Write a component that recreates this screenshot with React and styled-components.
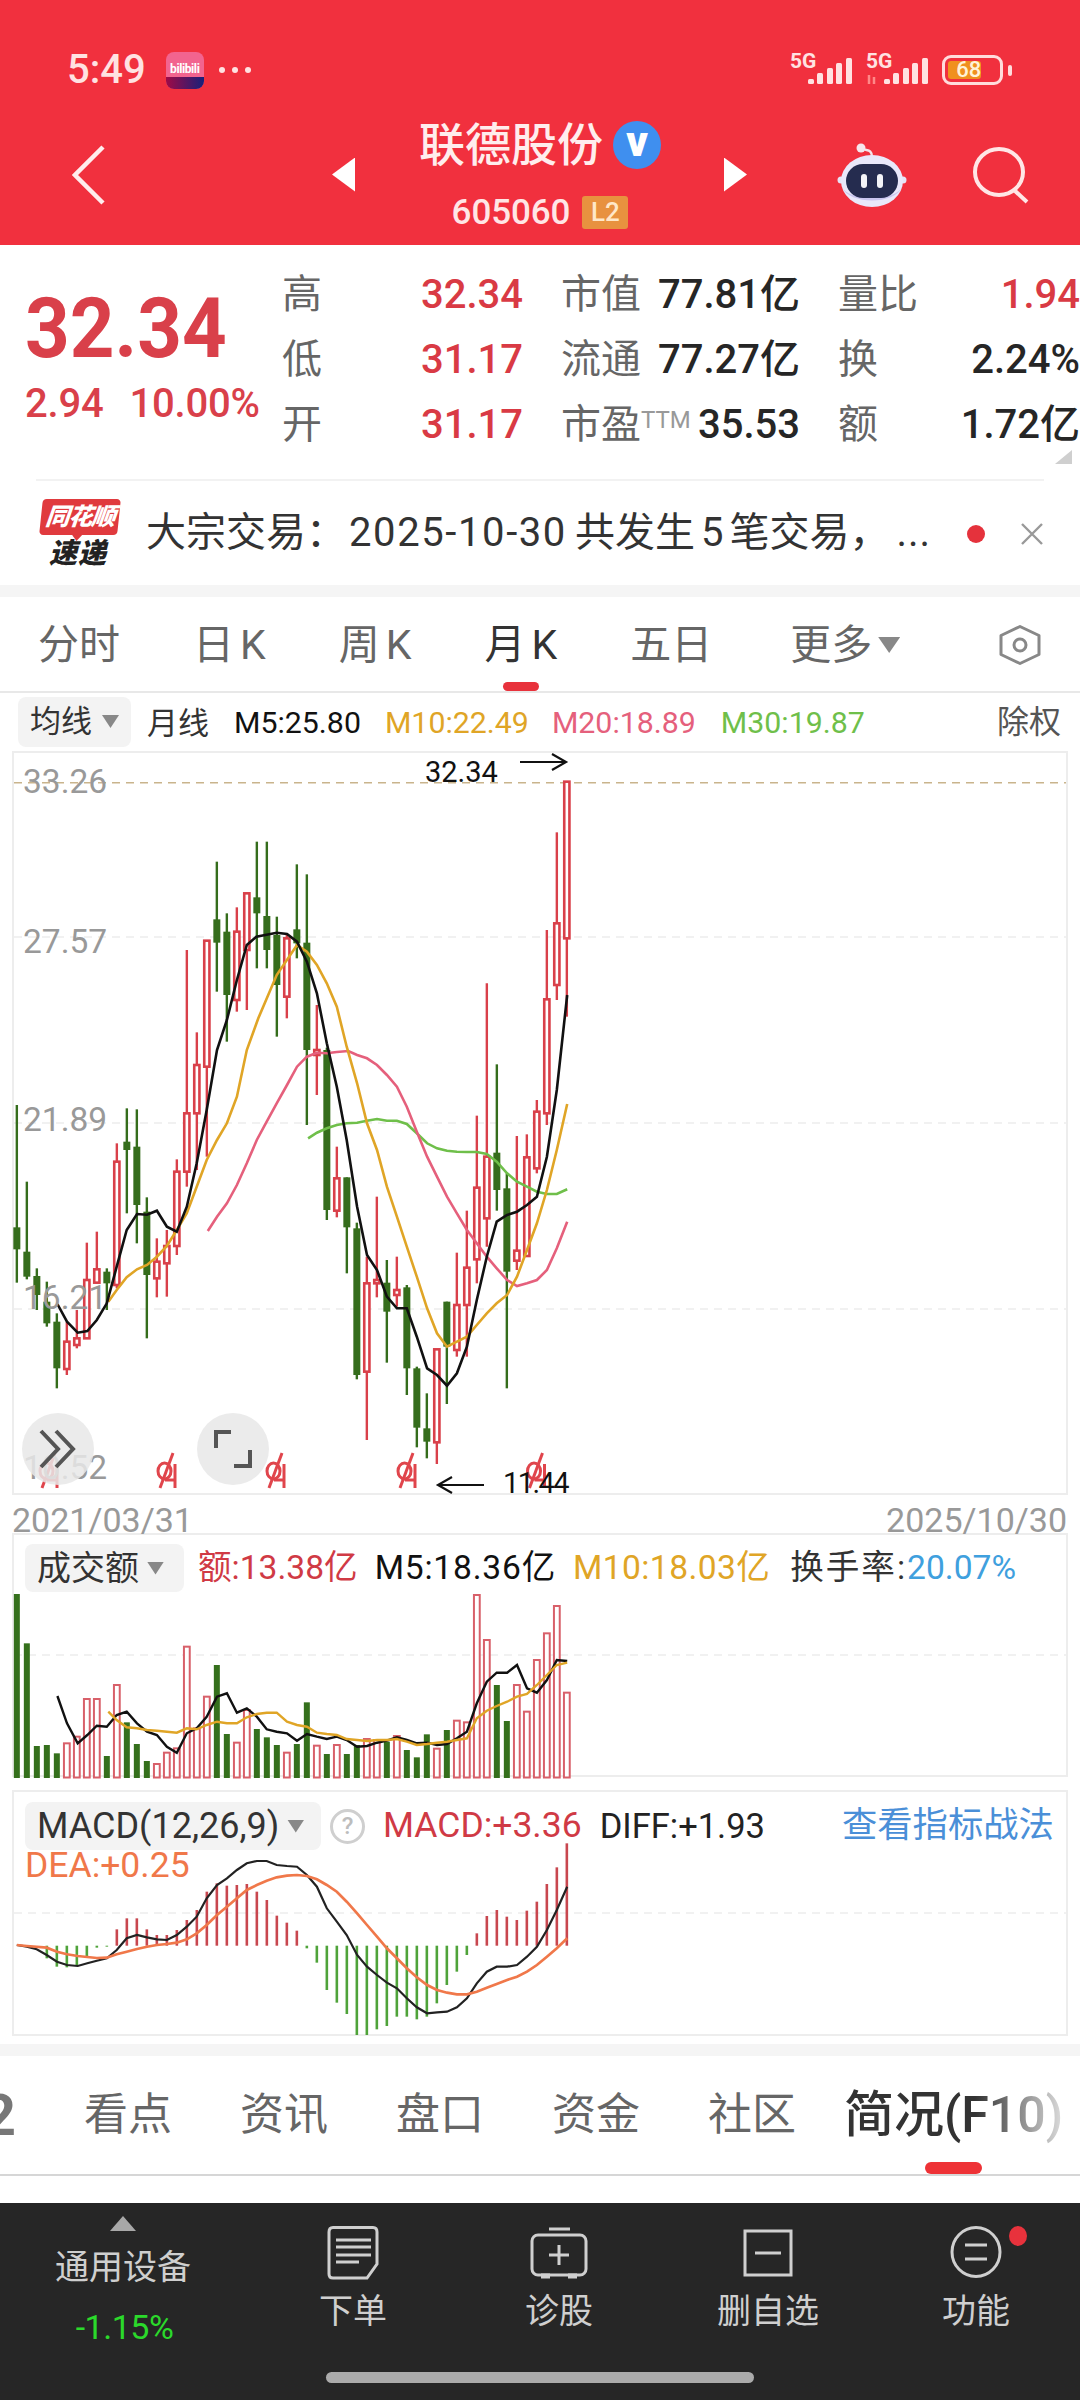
import React from "react";
import styled, { createGlobalStyle } from "styled-components";

const FONT = `Roboto, "Noto Sans CJK SC", sans-serif`;
const RED = "#D9404A";
const GREEN = "#356D1C";

const Global = createGlobalStyle`
  html, body { margin: 0; padding: 0; background: #fff; }
  body { font-family: ${FONT}; }
  * { box-sizing: border-box; }
`;

/* ---------- data: x in zoomed units (÷2.613), y in zoomed units (÷3) ---------- */
const cx = (i) => (44 + 26.13 * i) / 2.613;
const mainY = (z) => 1000 + z / 3;
const subY = (z) => 1520 + z / 3;
const pts = (arr, fy) => arr.map(([x, y]) => `${(x / 2.613).toFixed(1)},${fy(y).toFixed(1)}`).join(" ");

const CANDLES = [
  ["g",315,848,682,748],["g",545,838,755,830],["g",805,930,828,885],["g",845,980,905,970],
  ["g",940,1165,965,1105],["r",965,1125,1025,1107],["r",930,1045,1015,1035],["r",728,1015,840,1015],
  ["r",695,850,808,848],["g",805,930,815,850],["r",430,865,485,855],["g",325,640,425,450],
  ["g",328,730,440,615],["g",592,1015,635,825],["r",715,892,785,835],["r",690,890,738,790],
  ["r",478,765,515,738],["r",-150,560,340,515],["r",97,510,195,340],["r",-178,470,-178,200],
  ["g",-415,-25,-242,-172],["g",-260,125,-205,-15],["r",-278,35,-205,0],["r",-320,30,-320,-150],
  ["g",-475,-95,-308,-260],["g",-475,-95,-252,-150],["g",-250,110,-195,-45],["r",-195,55,-185,-10],
  ["g",-407,-125,-212,-170],["g",-377,375,-172,150],["r",15,285,150,165],["g",143,660,150,630],
  ["r",440,652,535,632],["g",532,820,532,682],["g",668,1138,685,1125],["r",770,1320,850,1115],
  ["r",590,892,840,850],["g",780,1088,848,935],["r",770,920,870,885],["g",855,1185,862,1105],
  ["g",1100,1342,1105,1283],["g",1180,1375,1285,1325],["r",1048,1392,1048,1327],["g",905,1212,905,1040],
  ["r",758,1070,915,1050],["r",632,1070,803,915],["r",347,850,563,778],["r",-50,740,470,655],
  ["g",193,632,458,570],["g",520,1165,565,815],["r",408,810,752,782],["r",403,770,472,768],
  ["r",300,520,335,505],["r",-210,375,-2,340],["r",-503,0,-230,-45],["r",-655,50,-655,-185],
];

const MA5 = [[150,912],[175,965],[203,998],[228,993],[253,960],[279,910],[305,800],[331,690],[358,642],[384,644],[410,632],[436,680],[462,695],[488,620],[514,490],[540,330],[567,150],[593,60],[619,-60],[645,-165],[670,-190],[723,-202],[750,-198],[776,-175],[802,-115],[828,-20],[854,130],[880,260],[906,420],[933,620],[959,765],[985,810],[1011,890],[1037,925],[1063,925],[1089,1010],[1116,1105],[1142,1125],[1168,1157],[1194,1120],[1220,1040],[1246,900],[1272,770],[1298,665],[1325,645],[1351,635],[1377,615],[1403,590],[1429,470],[1455,270],[1482,-15]];
const MA10 = [[283,905],[305,870],[331,832],[358,808],[384,795],[410,770],[436,738],[462,690],[488,640],[514,560],[540,480],[567,420],[593,370],[619,290],[645,150],[675,55],[723,-75],[776,-165],[802,-145],[828,-105],[854,-50],[880,20],[906,140],[933,250],[959,370],[985,450],[1011,560],[1037,650],[1063,740],[1089,830],[1116,925],[1142,1000],[1168,1040],[1194,1025],[1220,1010],[1246,975],[1272,940],[1298,910],[1325,885],[1351,830],[1377,750],[1403,670],[1429,570],[1455,450],[1482,312]];
const MA20 = [[543,693],[567,650],[593,610],[619,555],[645,490],[671,420],[697,365],[723,310],[750,255],[776,200],[802,170],[828,158],[854,160],[880,156],[910,153],[933,165],[959,175],[985,195],[1011,225],[1037,260],[1063,320],[1089,395],[1116,470],[1142,530],[1168,590],[1194,640],[1220,690],[1246,730],[1272,770],[1298,805],[1325,840],[1351,858],[1377,850],[1403,840],[1429,810],[1455,745],[1482,665]];
const MA30 = [[805,415],[828,398],[854,385],[880,375],[906,370],[933,368],[959,362],[985,357],[1011,362],[1037,362],[1063,372],[1089,400],[1116,430],[1142,445],[1168,452],[1194,455],[1220,456],[1246,456],[1272,462],[1298,485],[1325,520],[1351,545],[1377,560],[1403,575],[1429,582],[1455,582],[1482,568]];

const VOL = "g222 g370 g678 g675 g700 r670 r650 r537 r537 g708 r495 g607 g672 g723 r732 r698 r685 r380 r625 r530 g435 g642 r668 r570 g627 g652 g675 r698 g672 g547 r677 g702 r675 g702 g675 r657 r660 g665 r648 g690 g712 g643 r686 g630 r602 r607 r225 r360 g495 g603 r495 r575 r420 r340 r258 r518".split(" ").map((s) => [s[0], +s.slice(1)]);
const VOL5 = [[150,528],[175,610],[203,670],[228,645],[253,617],[279,620],[305,585],[331,575],[358,610],[384,635],[410,645],[436,680],[462,698],[488,640],[514,625],[540,590],[567,530],[593,520],[619,578],[645,565],[671,590],[697,628],[723,635],[750,640],[776,662],[802,642],[828,650],[854,657],[880,650],[906,660],[933,680],[959,678],[985,668],[1011,662],[1037,652],[1063,660],[1089,670],[1116,668],[1142,675],[1168,672],[1194,655],[1220,635],[1246,550],[1272,485],[1298,458],[1325,458],[1351,435],[1377,505],[1403,518],[1429,480],[1455,420],[1482,423]];
const VOL10 = [[283,575],[305,600],[331,622],[358,625],[384,630],[410,632],[436,635],[462,638],[488,625],[514,628],[540,615],[567,605],[593,610],[619,610],[645,592],[671,582],[697,578],[723,578],[750,605],[776,615],[802,620],[828,638],[854,642],[880,645],[906,657],[933,660],[959,663],[985,660],[1011,660],[1037,657],[1063,665],[1089,675],[1116,672],[1142,668],[1168,665],[1194,660],[1220,655],[1246,595],[1272,572],[1298,558],[1325,545],[1351,530],[1377,522],[1403,495],[1429,465],[1455,435],[1482,428]];

const MACD = [0,0,0,1315,1340,1342,1335,1310,1283,1280,1228,1195,1195,1228,1245,1245,1230,1200,1170,1115,1090,1097,1095,1092,1115,1140,1187,1208,1232,1285,1328,1410,1448,1482,1545,1545,1528,1518,1490,1490,1498,1490,1450,1395,1355,1305,1240,1188,1170,1190,1200,1172,1145,1092,1042,970];
const DIFF = [[44,1275],[70,1280],[96,1288],[122,1305],[149,1325],[175,1335],[203,1338],[228,1330],[253,1322],[279,1315],[305,1290],[331,1255],[358,1245],[384,1252],[410,1258],[436,1260],[462,1245],[488,1220],[514,1190],[540,1135],[567,1095],[593,1075],[619,1050],[645,1030],[671,1023],[697,1023],[723,1035],[750,1038],[776,1040],[802,1065],[828,1100],[854,1165],[880,1205],[906,1245],[933,1305],[959,1340],[985,1365],[1011,1388],[1037,1405],[1063,1435],[1089,1462],[1116,1480],[1142,1477],[1168,1475],[1194,1462],[1220,1435],[1246,1390],[1272,1355],[1298,1340],[1325,1340],[1351,1335],[1377,1310],[1403,1280],[1429,1230],[1455,1170],[1482,1100]];
const DEA = [[44,1275],[70,1278],[122,1283],[149,1295],[175,1303],[203,1308],[253,1314],[279,1313],[305,1303],[331,1295],[358,1287],[384,1280],[410,1275],[436,1272],[462,1268],[488,1258],[514,1240],[540,1215],[567,1185],[593,1160],[619,1135],[645,1110],[671,1095],[697,1082],[723,1072],[750,1067],[776,1065],[802,1068],[828,1078],[854,1095],[880,1115],[906,1145],[933,1180],[959,1215],[985,1250],[1011,1285],[1037,1315],[1063,1345],[1089,1372],[1116,1395],[1142,1410],[1168,1418],[1194,1423],[1220,1423],[1246,1415],[1272,1403],[1298,1392],[1325,1380],[1351,1370],[1377,1355],[1403,1335],[1429,1310],[1455,1285],[1482,1255]];

/* ---------- page ---------- */
const Page = styled.div`
  width: 1080px; height: 2400px; overflow: hidden; display: flex; flex-direction: column;
  background: #fff; font-family: ${FONT};
`;

/* ---------- header ---------- */
const Header = styled.header`
  height: 245px; flex: none; background: #F1303E; color: #FFE9E9; display: flex; flex-direction: column;
`;
const StatusBar = styled.div`
  height: 110px; padding: 30px 68px 0 67px; display: flex; align-items: center;
`;
const Clock = styled.span`
  font-size: 40px; font-weight: 500; line-height: 1; color: #FFE2E2;
`;
const BiliIcon = styled.div`
  width: 38px; height: 37px; margin-left: 20px; border-radius: 8px; overflow: hidden; display: flex; flex-direction: column;
  background: #F2648F;
`;
const BiliName = styled.span`
  flex: 1; display: flex; align-items: flex-end; justify-content: center; font-size: 12px; font-weight: 700;
  color: #fff; letter-spacing: -0.4px; line-height: 1; padding-bottom: 2px;
`;
const BiliBand = styled.span`
  height: 12px; background: linear-gradient(90deg, #A00A46, #18207A);
`;
const MoreDots = styled.div`
  display: flex; gap: 7px; margin-left: 15px;
`;
const Dot = styled.i`
  width: 6px; height: 6px; border-radius: 50%; background: #FFE2E2;
`;
const StatusRight = styled.div`
  margin-left: auto; display: flex; align-items: center; gap: 14px;
`;
const Battery = styled.div`
  display: flex; align-items: center; gap: 5px;
`;
const BatteryShell = styled.div`
  width: 61px; height: 30px; border: 3px solid #FFDCDC; border-radius: 9px; padding: 3px; display: flex;
`;
const BatteryFill = styled.div`
  width: 68%; background: #F0901F; border-radius: 3px; color: #FFF3D8; font-size: 22px; font-weight: 500; line-height: 18px;
  display: flex; justify-content: flex-end;
`;
const BatteryNub = styled.i`
  width: 4px; height: 11px; border-radius: 2px; background: #FFDCDC;
`;

const Nav = styled.div`
  flex: 1; display: flex; align-items: center; padding: 0 0 6px 72px;
`;
const NavTri = styled.i`
  width: 23px; height: 34px; flex: none; margin-left: ${(p) => p.$ml}px; background: #FFF;
  clip-path: ${(p) => (p.$dir === "l" ? "polygon(100% 0, 100% 100%, 0 50%)" : "polygon(0 0, 100% 50%, 0 100%)")};
`;
const TitleCol = styled.div`
  width: 242px; margin-left: 64px; display: flex; flex-direction: column; align-items: center;
`;
const TitleRow = styled.div`
  display: flex; align-items: center; gap: 10px; height: 48px;
`;
const TitleText = styled.span`
  font-size: 46px; font-weight: 500; color: #FFEDED; line-height: 1;
`;
const VBadge = styled.span`
  width: 48px; height: 48px; border-radius: 50%; background: #3F8FEF; color: #fff; font-size: 42px; font-weight: 900;
  display: flex; align-items: center; justify-content: center; line-height: 1; padding-bottom: 5px;
`;
const CodeRow = styled.div`
  display: flex; align-items: center; gap: 12px; height: 33px; margin-top: 27px;
`;
const CodeText = styled.span`
  font-size: 35px; font-weight: 500; line-height: 1; color: #FFE6E6; letter-spacing: -0.1px;
`;
const L2 = styled.span`
  width: 46px; height: 33px; background: #E8913F; border-radius: 3px; color: #FFE7C8; font-size: 26px; font-weight: 500;
  display: flex; align-items: center; justify-content: center;
`;

/* ---------- quote ---------- */
const Quote = styled.section`
  height: 234px; flex: none; position: relative; display: flex; padding-top: 17px;
`;
const PriceCol = styled.div`
  width: 282px; flex: none; padding-left: 25px;
`;
const BigPrice = styled.div`
  margin-top: 22px; height: 90px; font-size: 78px; line-height: 90px; font-weight: 700; color: ${RED};
  transform: scaleY(1.08); transform-origin: left center;
`;
const PriceSub = styled.div`
  margin-top: 10px; height: 40px; display: flex; gap: 26px; font-size: 40px; line-height: 40px; color: ${RED};
  font-weight: 500; white-space: nowrap; letter-spacing: -0.2px;
`;
const StatGrid = styled.div`
  flex: 1; display: grid; grid-template-columns: 241px 239px 242px; column-gap: 38px; grid-auto-rows: 65px; align-items: center;
`;
const Stat = styled.div`
  display: flex; justify-content: space-between; align-items: center; font-size: 40px; line-height: 1; white-space: nowrap;
`;
const StatLabel = styled.span`
  color: #666; font-weight: 400;
`;
const StatValue = styled.span`
  color: ${(p) => (p.$red ? "#D93A44" : "#262626")}; font-weight: 500;
`;
const Ttm = styled.span`
  font-size: 24px; color: #999; vertical-align: 10px;
`;
const CornerMark = styled.i`
  position: absolute; right: 8px; bottom: 15px; width: 17px; height: 14px; background: #CFCFCF;
  clip-path: polygon(100% 0, 100% 100%, 0 100%);
`;

/* ---------- ticker ---------- */
const Ticker = styled.section`
  height: 106px; flex: none; margin: 0 36px; border-top: 2px solid #F2F2F2; display: flex; align-items: center; position: relative;
`;
const Logo = styled.div`
  width: 84px; flex: none; display: flex; flex-direction: column; align-items: center; margin-top: 2px;
`;
const LogoTop = styled.div`
  width: 78px; height: 36px; margin-left: 4px; background: #E03A3E; border-radius: 4px; color: #fff; position: relative;
  font-size: 24px; font-weight: 900; font-style: italic; line-height: 36px; text-align: center; letter-spacing: -1px;
  transform: skewX(-6deg);
  &::after {
    content: ""; position: absolute; left: 33px; bottom: -6px; width: 10px; height: 6px; background: #E03A3E;
    clip-path: polygon(0 0, 100% 0, 50% 100%);
  }
`;
const LogoBottom = styled.div`
  margin-top: 4px; font-size: 28px; line-height: 30px; font-weight: 900; font-style: italic; color: #222; letter-spacing: 1px;
`;
const TickerText = styled.div`
  margin-left: 26px; font-size: 40px; line-height: 1; color: #333; white-space: nowrap;
`;
const TickerNum = styled.span`
  letter-spacing: ${(p) => p.$ls || 0}px; margin: 0 ${(p) => p.$mr || 0}px 0 ${(p) => p.$ml || 0}px;
`;
const TickerMore = styled.span`
  margin-left: 7px; letter-spacing: 1px;
`;
const TickerDot = styled.i`
  position: absolute; left: 931px; top: 44px; width: 18px; height: 18px; border-radius: 50%; background: #E5323C;
`;
const TickerClose = styled.span`
  position: absolute; left: 985px; top: 42px; width: 22px; height: 22px; display: flex;
`;
const Band = styled.div`
  height: ${(p) => p.$h}px; flex: none; background: #F5F5F5;
`;

/* ---------- tabs ---------- */
const Tabs = styled.nav`
  height: 96px; flex: none; border-bottom: 2px solid #E8E8E8; padding-left: 38px; display: flex; align-items: stretch; gap: 73px;
`;
const Tab = styled.span`
  position: relative; display: flex; align-items: center; padding-top: 2px; font-size: 41px; color: ${(p) => (p.$active ? "#333" : "#666")};
  line-height: 1; white-space: nowrap; margin-left: ${(p) => p.$ml || 0}px;
  ${(p) => p.$active && `
    &::after { content: ""; position: absolute; left: 50%; margin-left: -18px; bottom: 0; width: 36px; height: 9px; border-radius: 5px; background: #E8323C; }
  `}
`;
const TabK = styled.span`
  margin-left: 6px;
`;
const Caret = styled.i`
  display: inline-block; width: ${(p) => p.$w || 22}px; height: ${(p) => p.$h || 16}px; margin-left: ${(p) => p.$ml ?? 6}px; background: #888; flex: none;
  clip-path: polygon(0 0, 100% 0, 50% 100%);
`;
const TabIcon = styled.span`
  display: flex; align-items: center; margin-left: 25px; padding-top: 2px;
`;

/* ---------- ma row ---------- */
const MaRow = styled.div`
  height: 57px; flex: none; display: flex; align-items: center; padding-left: 18px; white-space: nowrap; position: relative;
`;
const Pill = styled.div`
  height: ${(p) => p.$h || 48}px; width: ${(p) => p.$w}px; background: #F3F3F3; border-radius: 8px; display: flex; align-items: center; padding-left: 12px;
  font-size: ${(p) => p.$fs || 31}px; color: #333; line-height: 1; white-space: nowrap; flex: none;
`;
const Legend = styled.span`
  color: ${(p) => p.$c}; margin-left: ${(p) => p.$ml || 0}px; line-height: 1; white-space: nowrap; font-size: ${(p) => p.$fs || 30.3}px;
  letter-spacing: ${(p) => p.$ls || 0}px; position: relative; top: ${(p) => p.$dy || 0}px;
`;
const MaRight = styled.span`
  margin-left: auto; margin-right: 19px; color: #555; font-size: 32px; line-height: 1;
`;

/* ---------- chart panels ---------- */
const Panel = styled.section`
  margin: ${(p) => p.$top || 0}px 12px 0; height: ${(p) => p.$h}px; flex: none; border: 2px solid #EDEDED; position: relative;
`;
const Plot = styled.svg`
  display: block; width: 1052px; height: ${(p) => p.$h}px; overflow: visible;
`;
const AxisLabel = styled.span`
  position: absolute; left: 9px; top: ${(p) => p.$top}px; font-size: 33.5px; line-height: 1; color: #999;
`;
const Note = styled.span`
  position: absolute; left: ${(p) => p.$left}px; top: ${(p) => p.$top}px; font-size: 29px; line-height: 1; color: #111; letter-spacing: ${(p) => p.$ls || 0}px;
`;
const RoundBtn = styled.span`
  position: absolute; left: ${(p) => p.$left}px; top: 660px; width: 72px; height: 72px; border-radius: 50%; background: rgba(232, 232, 232, 0.85);
  display: flex; align-items: center; justify-content: center;
`;
const DateRow = styled.div`
  height: 38px; flex: none; display: flex; justify-content: space-between; padding: 8px 13px 0 12px; font-size: 34px; line-height: 1; color: #999;
  position: relative; z-index: 1;
`;
const SubHeader = styled.div`
  height: 58px; display: flex; align-items: center; padding: 8px 0 0 11px; white-space: nowrap; line-height: 1;
`;
const MacdHeader = styled.div`
  position: absolute; left: 11px; top: 10px; right: 0; display: flex; align-items: center; white-space: nowrap; line-height: 1;
`;
const QMark = styled.span`
  width: 35px; height: 35px; margin-left: 9px; border: 3px solid #CFCFCF; border-radius: 50%; color: #BDBDBD; font-size: 24px; font-weight: 500;
  display: flex; align-items: center; justify-content: center; line-height: 1; flex: none;
`;
const Strategy = styled.span`
  position: absolute; left: 817px; color: #4A8FD8; font-size: 35.3px; line-height: 1;
`;
const Dea = styled.span`
  position: absolute; left: 11px; top: 56px; font-size: 35.5px; line-height: 1; color: #F0784A;
`;

/* ---------- lower tabs ---------- */
const LowerTabs = styled.nav`
  height: 120px; flex: none; border-bottom: 2px solid #D6D6D6; display: flex; align-items: stretch; gap: 68px; overflow: hidden; position: relative;
`;
const ClippedTab = styled.span`
  width: 16px; flex: none; display: flex; justify-content: flex-end; align-items: center; overflow: hidden; font-size: 58px; font-weight: 700; color: #777; line-height: 1;
`;
const LowerTab = styled.span`
  display: flex; align-items: center; font-size: 44px; line-height: 1; color: #666; white-space: nowrap; flex: none; position: relative;
  ${(p) => p.$active && `
    margin-left: -20px; font-size: 50px; font-weight: 500; color: #333;
    &::before { content: ""; position: absolute; left: 50%; margin-left: -29px; bottom: 0; width: 57px; height: 12px; border-radius: 6px; background: #EE3236; }
    &::after { content: ""; position: absolute; right: -2px; top: 0; width: 90px; height: 100px; background: linear-gradient(90deg, rgba(255,255,255,0), rgba(255,255,255,.85)); }
  `}
`;
const Spacer = styled.div`
  height: ${(p) => p.$h}px; flex: none;
`;

/* ---------- bottom ---------- */
const Bottom = styled.footer`
  flex: 1; background: #262626; position: relative; display: grid; grid-template-columns: 246px 214px 198px 220px 196px; color: #CFCFCF;
`;
const SectorCell = styled.div`
  display: flex; flex-direction: column; align-items: center; padding-top: 13px;
`;
const UpTri = styled.i`
  width: 26px; height: 15px; background: #A8A8A8; clip-path: polygon(50% 0, 100% 100%, 0 100%);
`;
const SectorName = styled.span`
  margin-top: 19px; font-size: 34px; line-height: 1; color: #CFCFCF;
`;
const SectorPct = styled.span`
  margin-top: 26px; margin-left: 3px; font-size: 34px; line-height: 1; color: #2BD92B; letter-spacing: -0.5px;
`;
const Action = styled.div`
  display: flex; flex-direction: column; align-items: center; padding-top: 23px; position: relative;
`;
const ActionIcon = styled.svg`
  height: 54px; width: 60px; display: block;
`;
const ActionLabel = styled.span`
  margin-top: 14px; font-size: 34px; line-height: 1; color: #CFCFCF; white-space: nowrap;
`;
const NoticeDot = styled.i`
  position: absolute; left: 131px; top: 23px; width: 18px; height: 20px; border-radius: 50%; background: #E8323C;
`;
const HomeBar = styled.i`
  position: absolute; left: 326px; top: 169px; width: 428px; height: 11px; border-radius: 6px; background: #ABABAB;
`;

/* ---------- drawings ---------- */
const Back = () => (
  <svg width="33" height="60" viewBox="0 0 33 60" fill="none" style={{ flex: "none" }}>
    <path d="M31 2 L3 30 L31 58" stroke="#FFEDED" strokeWidth="4.5" />
  </svg>
);
const Robot = () => (
  <svg width="70" height="64" viewBox="0 0 70 64" style={{ flex: "none", marginLeft: 90 }}>
    <path d="M35 14 C35 6 30 8 26 6" stroke="#F5E3EA" strokeWidth="2.5" fill="none" />
    <circle cx="24" cy="5" r="4.5" fill="#F6E6EC" />
    <circle cx="4" cy="37" r="3.5" fill="#E6E4F6" />
    <circle cx="66" cy="37" r="3.5" fill="#E6E4F6" />
    <ellipse cx="35" cy="38" rx="31" ry="26" fill="#E9E8FA" />
    <path d="M5 44 C12 62 58 62 65 44 C60 58 10 58 5 44Z" fill="#C9C5EE" />
    <rect x="9" y="21" width="52" height="34" rx="17" fill="#252C4F" />
    <rect x="24" y="31" width="6" height="14" rx="3" fill="#F4F4F8" />
    <rect x="40" y="31" width="6" height="14" rx="3" fill="#F4F4F8" />
  </svg>
);
const Search = () => (
  <svg width="58" height="58" viewBox="0 0 58 58" fill="none" style={{ flex: "none", marginLeft: 65 }}>
    <ellipse cx="27" cy="26" rx="24" ry="23" stroke="#FFE6E6" strokeWidth="4" />
    <path d="M42 44 L55 56" stroke="#FFE6E6" strokeWidth="4" />
  </svg>
);
const BARS = [[21, 26], [30, 20], [40, 15], [49, 10], [59, 5]];
const Signal = ({ arrows }) => (
  <svg width="62" height="50" viewBox="0 -8 62 50">
    <text x="0" y="15" fontSize="21" fontWeight="700" fill="#FFE2E2" fontFamily="Roboto, sans-serif">5G</text>
    {BARS.map(([x, y]) => (
      <rect key={x} x={x - 3} y={y} width="6" height={31 - y} rx="1.5" fill="#FFE2E2" />
    ))}
    {arrows && <path d="M3 22V31M8 24V31" stroke="#F88" strokeWidth="2.5" />}
  </svg>
);
const Hexagon = () => (
  <svg width="44" height="40" viewBox="0 0 44 40" fill="none">
    <path d="M22 1.5 L41 10.5 V29.5 L22 38.5 L3 29.5 V10.5Z" stroke="#888" strokeWidth="3" strokeLinejoin="round" />
    <circle cx="22" cy="20" r="6" stroke="#888" strokeWidth="3" />
  </svg>
);
const Mark = ({ x }) => (
  <g transform={`translate(${x - 17} 1440)`} fill="none" stroke="#E0454C" strokeWidth="3">
    <path d="M23 13 L10 48" />
    <ellipse cx="14.5" cy="31" rx="6.5" ry="8" />
    <path d="M25 24 V48" />
    <path d="M15 40 H25" />
  </g>
);

const CandleChart = () => (
  <Plot $h={740} viewBox="14 753 1052 740">
    <line x1="14" x2="1066" y1="782.7" y2="782.7" stroke="#C9B48C" strokeWidth="1.6" strokeDasharray="8 6" />
    {[937, 1123, 1309].map((y) => (
      <line key={y} x1="14" x2="1066" y1={y} y2={y} stroke="#EDEDED" strokeWidth="1.5" strokeDasharray="8 6" />
    ))}
    {CANDLES.map(([c, wt, wb, bt, bb], i) => {
      const x = cx(i);
      const color = c === "r" ? RED : GREEN;
      return (
        <g key={i}>
          <line x1={x} x2={x} y1={mainY(wt)} y2={mainY(wb)} stroke={color} strokeWidth="2.4" />
          {c === "r" ? (
            <rect x={x - 2.6} y={mainY(bt)} width="5.2" height={Math.max((bb - bt) / 3, 2)} fill="#fff" stroke={color} strokeWidth="2.6" />
          ) : (
            <rect x={x - 3.5} y={mainY(bt)} width="7" height={(bb - bt) / 3} fill={color} />
          )}
        </g>
      );
    })}
    <polyline points={pts(MA30, mainY)} fill="none" stroke="#6FBF4A" strokeWidth="2.6" />
    <polyline points={pts(MA20, mainY)} fill="none" stroke="#E5607C" strokeWidth="2.6" />
    <polyline points={pts(MA10, mainY)} fill="none" stroke="#E0A526" strokeWidth="2.6" />
    <polyline points={pts(MA5, mainY)} fill="none" stroke="#111" strokeWidth="2.6" />
    {[49, 167, 276, 407, 536.5].map((x) => <Mark key={x} x={x} />)}
    <path d="M520 762 H566 M552 754 L566 762 L552 770" fill="none" stroke="#111" strokeWidth="2.2" />
    <path d="M484 1485 H438 M452 1477 L438 1485 L452 1493" fill="none" stroke="#111" strokeWidth="2.2" />
  </Plot>
);

const VolumeChart = () => (
  <Plot $h={182} viewBox="14 1593 1052 182">
    <line x1="14" x2="1066" y1="1655" y2="1655" stroke="#EDEDED" strokeWidth="1.5" strokeDasharray="8 6" />
    {VOL.map(([c, t], i) => {
      const x = cx(i);
      const y = subY(t);
      return c === "r" ? (
        <rect key={i} x={x - 2.9} y={y} width="5.8" height={1777.5 - y} fill="#fff" stroke="#D8606A" strokeWidth="2" />
      ) : (
        <rect key={i} x={x - 3} y={y} width="6" height={1778 - y} fill="#35701C" />
      );
    })}
    <polyline points={pts(VOL5, subY)} fill="none" stroke="#111" strokeWidth="2.4" />
    <polyline points={pts(VOL10, subY)} fill="none" stroke="#E0A526" strokeWidth="2.4" />
  </Plot>
);

const MacdChart = () => (
  <Plot $h={242} viewBox="14 1792 1052 242">
    <line x1="14" x2="1066" y1="1913" y2="1913" stroke="#EDEDED" strokeWidth="1.5" strokeDasharray="8 6" />
    {MACD.map((z, i) => {
      if (!z) return null;
      const x = cx(i);
      const y = subY(z);
      return <line key={i} x1={x} x2={x} y1="1945.7" y2={y} stroke={y < 1945.7 ? "#C8474F" : "#4FA33A"} strokeWidth="2.6" />;
    })}
    <polyline points={pts(DIFF, subY)} fill="none" stroke="#222" strokeWidth="2.2" />
    <polyline points={pts(DEA, subY)} fill="none" stroke="#F0784A" strokeWidth="2.7" />
  </Plot>
);

export default function App() {
  return (
    <Page>
      <Global />
      <Header>
        <StatusBar>
          <Clock>5:49</Clock>
          <BiliIcon>
            <BiliName>bilibili</BiliName>
            <BiliBand />
          </BiliIcon>
          <MoreDots><Dot /><Dot /><Dot /></MoreDots>
          <StatusRight>
            <Signal />
            <Signal arrows />
            <Battery>
              <BatteryShell><BatteryFill>68</BatteryFill></BatteryShell>
              <BatteryNub />
            </Battery>
          </StatusRight>
        </StatusBar>
        <Nav>
          <Back />
          <NavTri $dir="l" $ml={227} />
          <TitleCol>
            <TitleRow>
              <TitleText>联德股份</TitleText>
              <VBadge>v</VBadge>
            </TitleRow>
            <CodeRow>
              <CodeText>605060</CodeText>
              <L2>L2</L2>
            </CodeRow>
          </TitleCol>
          <NavTri $dir="r" $ml={63} />
          <Robot />
          <Search />
        </Nav>
      </Header>

      <Quote>
        <PriceCol>
          <BigPrice>32.34</BigPrice>
          <PriceSub><span>2.94</span><span>10.00%</span></PriceSub>
        </PriceCol>
        <StatGrid>
          <Stat><StatLabel>高</StatLabel><StatValue $red>32.34</StatValue></Stat>
          <Stat><StatLabel>市值</StatLabel><StatValue>77.81亿</StatValue></Stat>
          <Stat><StatLabel>量比</StatLabel><StatValue $red>1.94</StatValue></Stat>
          <Stat><StatLabel>低</StatLabel><StatValue $red>31.17</StatValue></Stat>
          <Stat><StatLabel>流通</StatLabel><StatValue>77.27亿</StatValue></Stat>
          <Stat><StatLabel>换</StatLabel><StatValue>2.24%</StatValue></Stat>
          <Stat><StatLabel>开</StatLabel><StatValue $red>31.17</StatValue></Stat>
          <Stat><StatLabel>市盈<Ttm>TTM</Ttm></StatLabel><StatValue>35.53</StatValue></Stat>
          <Stat><StatLabel>额</StatLabel><StatValue>1.72亿</StatValue></Stat>
        </StatGrid>
        <CornerMark />
      </Quote>

      <Ticker>
        <Logo>
          <LogoTop>同花顺</LogoTop>
          <LogoBottom>速递</LogoBottom>
        </Logo>
        <TickerText>大宗交易：<TickerNum $ml={3} $mr={8} $ls={1.6}>2025-10-30</TickerNum>共发生<TickerNum $ml={6} $mr={6}>5</TickerNum>笔交易，<TickerMore>...</TickerMore></TickerText>
        <TickerDot />
        <TickerClose>
          <svg width="22" height="22" viewBox="0 0 22 22"><path d="M1 1 L21 21 M21 1 L1 21" stroke="#999" strokeWidth="2.4" /></svg>
        </TickerClose>
      </Ticker>
      <Band $h={12} />

      <Tabs>
        <Tab>分时</Tab>
        <Tab>日<TabK>K</TabK></Tab>
        <Tab>周<TabK>K</TabK></Tab>
        <Tab $active>月<TabK>K</TabK></Tab>
        <Tab>五日</Tab>
        <Tab $ml={5}>更多<Caret /></Tab>
        <TabIcon><Hexagon /></TabIcon>
      </Tabs>

      <MaRow>
        <Pill $w={113} $h={50}>均线<Caret $w={17} $h={13} $ml={10} /></Pill>
        <Legend $c="#333" $ml={16} $dy={2} $fs={31}>月线</Legend>
        <Legend $c="#111" $ml={25} $dy={2}>M5:25.80</Legend>
        <Legend $c="#E0A526" $ml={24} $dy={2}>M10:22.49</Legend>
        <Legend $c="#E5607C" $ml={23} $dy={2}>M20:18.89</Legend>
        <Legend $c="#6FBF4A" $ml={25} $dy={2}>M30:19.87</Legend>
        <MaRight>除权</MaRight>
      </MaRow>

      <Panel $h={744} $top={1}>
        <CandleChart />
        <AxisLabel $top={12}>33.26</AxisLabel>
        <AxisLabel $top={172}>27.57</AxisLabel>
        <AxisLabel $top={350}>21.89</AxisLabel>
        <AxisLabel $top={528}>16.21</AxisLabel>
        <AxisLabel $top={698}>10.52</AxisLabel>
        <Note $left={411} $top={5}>32.34</Note>
        <Note $left={489} $top={716} $ls={-1.6}>11.44</Note>
        <RoundBtn $left={8}>
          <svg width="40" height="42" viewBox="0 0 40 42" fill="none">
            <path d="M3 3 L20 21 L3 39 M18 3 L35 21 L18 39" stroke="#555" strokeWidth="4" />
          </svg>
        </RoundBtn>
        <RoundBtn $left={183}>
          <svg width="38" height="38" viewBox="0 0 38 38" fill="none">
            <path d="M2 18 V2 H17 M36 20 V36 H20" stroke="#555" strokeWidth="4" />
          </svg>
        </RoundBtn>
      </Panel>

      <DateRow><span>2021/03/31</span><span>2025/10/30</span></DateRow>

      <Panel $h={244}>
        <SubHeader>
          <Pill $w={159} $fs={34}>成交额<Caret $w={17} $h={13} $ml={8} /></Pill>
          <Legend $c="#D03A45" $ml={14} $fs={33.6}>额:13.38亿</Legend>
          <Legend $c="#111" $ml={17} $fs={33.6} $ls={0.8}>M5:18.36亿</Legend>
          <Legend $c="#E0A526" $ml={17} $fs={33.6} $ls={0.4}>M10:18.03亿</Legend>
          <Legend $c="#333" $ml={20} $fs={33.6} $ls={2}>换手率:<Legend $c="#3FA0DE" $fs={33.6}>20.07%</Legend></Legend>
        </SubHeader>
        <VolumeChart />
      </Panel>

      <Panel $h={246} $top={13}>
        <MacdChart />
        <MacdHeader>
          <Pill $w={296} $fs={36}>MACD(12,26,9)<Caret $w={17} $h={13} $ml={8} /></Pill>
          <QMark>?</QMark>
          <Legend $c="#D03A45" $ml={18} $fs={35.5}>MACD:+3.36</Legend>
          <Legend $c="#222" $ml={18} $fs={34.5}>DIFF:+1.93</Legend>
          <Strategy>查看指标战法</Strategy>
        </MacdHeader>
        <Dea>DEA:+0.25</Dea>
      </Panel>

      <Spacer $h={8} />
      <Band $h={12} />

      <LowerTabs>
        <ClippedTab>2</ClippedTab>
        <LowerTab>看点</LowerTab>
        <LowerTab>资讯</LowerTab>
        <LowerTab>盘口</LowerTab>
        <LowerTab>资金</LowerTab>
        <LowerTab>社区</LowerTab>
        <LowerTab $active>简况(F10)</LowerTab>
      </LowerTabs>
      <Spacer $h={27} />

      <Bottom>
        <SectorCell>
          <UpTri />
          <SectorName>通用设备</SectorName>
          <SectorPct>-1.15%</SectorPct>
        </SectorCell>
        <Action>
          <ActionIcon viewBox="0 0 60 54" fill="none" stroke="#CFCFCF" strokeWidth="3">
            <path d="M10 1.5 H50 Q54 1.5 54 6 V38 L44 52 H10 Q6 52 6 48 V6 Q6 1.5 10 1.5Z" />
            <path d="M13 14 H48 M13 21 H48 M13 29 H48 M13 36 H36" />
          </ActionIcon>
          <ActionLabel>下单</ActionLabel>
        </Action>
        <Action>
          <ActionIcon viewBox="0 0 60 54" fill="none" stroke="#CFCFCF" strokeWidth="3">
            <path d="M20 3 H41" />
            <rect x="3" y="9" width="54" height="40" rx="6" />
            <path d="M30 19 V39 M20 29 H40" />
            <path d="M12 50 H21 M39 50 H48" strokeWidth="5" />
          </ActionIcon>
          <ActionLabel>诊股</ActionLabel>
        </Action>
        <Action>
          <ActionIcon viewBox="0 0 60 54" fill="none" stroke="#CFCFCF" strokeWidth="3">
            <rect x="7" y="5" width="46" height="44" />
            <path d="M17 27 H43" />
          </ActionIcon>
          <ActionLabel>删自选</ActionLabel>
        </Action>
        <Action>
          <ActionIcon viewBox="0 0 60 54" fill="none" stroke="#CFCFCF" strokeWidth="3">
            <ellipse cx="30" cy="26" rx="24" ry="24.5" />
            <path d="M19 19 H41 M19 33 H41" />
          </ActionIcon>
          <ActionLabel>功能</ActionLabel>
          <NoticeDot />
        </Action>
        <HomeBar />
      </Bottom>
    </Page>
  );
}
